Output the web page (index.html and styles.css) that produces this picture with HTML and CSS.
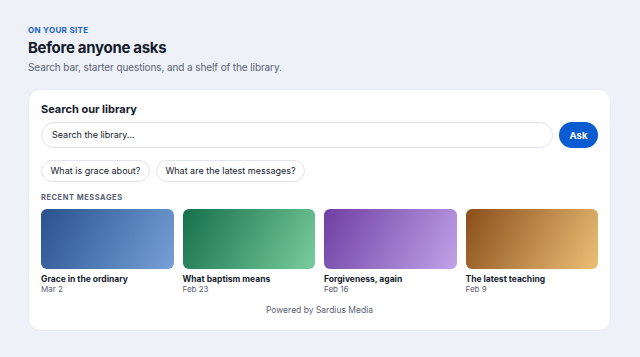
FILE: index.html
```html
<!DOCTYPE html>
<html lang="en">
<head>
<meta charset="utf-8">
<link rel="stylesheet" href="styles.css">
</head>
<body>
<main class="page">
  <header class="intro">
    <div class="eyebrow">ON YOUR SITE</div>
    <h1 class="title">Before anyone asks</h1>
    <p class="subtitle">Search bar, starter questions, and a shelf of the library.</p>
  </header>
  <section class="card">
    <h2 class="card-title">Search our library</h2>
    <div class="search-row">
      <div class="search-input">Search the library…</div>
      <button class="ask">Ask</button>
    </div>
    <div class="chips">
      <span class="chip">What is grace about?</span>
      <span class="chip">What are the latest messages?</span>
    </div>
    <div class="section-label">RECENT MESSAGES</div>
    <div class="shelf">
      <div class="item">
        <div class="thumb thumb-blue"></div>
        <div class="item-title">Grace in the ordinary</div>
        <div class="item-date">Mar 2</div>
      </div>
      <div class="item">
        <div class="thumb thumb-green"></div>
        <div class="item-title">What baptism means</div>
        <div class="item-date">Feb 23</div>
      </div>
      <div class="item">
        <div class="thumb thumb-purple"></div>
        <div class="item-title">Forgiveness, again</div>
        <div class="item-date">Feb 16</div>
      </div>
      <div class="item">
        <div class="thumb thumb-gold"></div>
        <div class="item-title">The latest teaching</div>
        <div class="item-date">Feb 9</div>
      </div>
    </div>
    <div class="powered">Powered by Sardius Media</div>
  </section>
</main>
</body>
</html>
```
FILE: styles.css
```css
* { box-sizing: border-box; }
html, body { margin: 0; padding: 0; }
body {
  background: #eef1f8;
  font-family: Inter, "Noto Sans", sans-serif;
  color: #151b2b;
  width: 640px;
  height: 357px;
  overflow: hidden;
}
.page {
  padding: 25px 29px 0 28px;
}
.intro { margin-bottom: 15px; }
.eyebrow {
  font-size: 8px;
  font-weight: 700;
  letter-spacing: 0.04em;
  color: #1a62c9;
  line-height: 10px;
}
.title {
  margin: 3px 0 0;
  font-size: 15px;
  font-weight: 700;
  line-height: 20px;
  letter-spacing: -0.02em;
  color: #151b2b;
}
.subtitle {
  margin: 2px 0 0;
  font-size: 10px;
  line-height: 14px;
  letter-spacing: -0.01em;
  color: #5b6273;
}
.card {
  background: #fff;
  border-radius: 12px;
  border: 1px solid #e8ebf1;
  padding: 12px 12px 14px 12px;
}
.card-title {
  margin: 0;
  font-size: 11px;
  font-weight: 700;
  line-height: 14px;
  color: #151b2b;
}
.search-row {
  display: flex;
  gap: 6px;
  margin-top: 6px;
}
.search-input {
  flex: 1;
  height: 26px;
  border: 1px solid #e1e4ea;
  border-radius: 13px;
  padding: 0 10px;
  font-size: 9px;
  line-height: 24px;
  color: #151b2b;
}
.ask {
  width: 39px;
  height: 26px;
  border: none;
  border-radius: 13px;
  background: #0b5cd0;
  color: #fff;
  font-family: inherit;
  font-size: 9.5px;
  font-weight: 700;
  padding: 0;
}
.chips {
  display: flex;
  gap: 6px;
  margin-top: 12px;
}
.chip {
  height: 22px;
  border: 1px solid #e1e4ea;
  border-radius: 11px;
  padding: 0 8.5px;
  font-size: 9px;
  line-height: 20px;
  color: #151b2b;
}
.section-label {
  margin-top: 11px;
  font-size: 7.5px;
  font-weight: 700;
  letter-spacing: 0.07em;
  color: #5b6273;
  line-height: 10px;
}
.shelf {
  display: grid;
  grid-template-columns: repeat(4, 1fr);
  gap: 9px;
  margin-top: 6px;
}
.thumb {
  height: 60px;
  border-radius: 6px;
}
.thumb-blue { background: linear-gradient(120deg, #29528f 0%, #76a0d6 100%); }
.thumb-green { background: linear-gradient(120deg, #15704a 0%, #79cc9d 100%); }
.thumb-purple { background: linear-gradient(120deg, #6e3fa3 0%, #c1a2e7 100%); }
.thumb-gold { background: linear-gradient(120deg, #8a4e1a 0%, #ecc077 100%); }
.item-title {
  margin-top: 4.5px;
  font-size: 8.5px;
  font-weight: 700;
  line-height: 10px;
  color: #151b2b;
}
.item-date {
  font-size: 8px;
  line-height: 10px;
  color: #5b6273;
}
.powered {
  margin-top: 11.5px;
  text-align: center;
  font-size: 8.5px;
  line-height: 11px;
  color: #5b6273;
}
```
